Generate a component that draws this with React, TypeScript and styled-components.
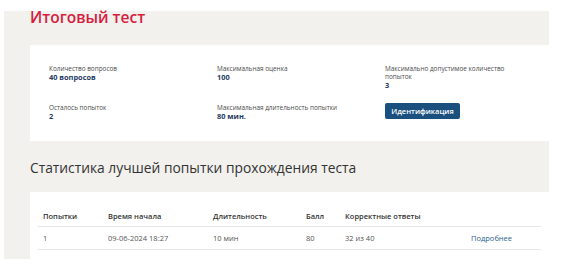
import React from "react";
import styled, { createGlobalStyle } from "styled-components";

const Global = createGlobalStyle`
  html, body { margin: 0; padding: 0; background: #ffffff; }
  body { font-family: "Open Sans", "Noto Sans", sans-serif; }
`;

const Page = styled.div`
  padding-top: 11px;
`;

const Panel = styled.section`
  margin-left: 4px;
  width: 545px;
  height: 248px;
  background: #f2f1ee;
  padding-left: 26px;
  box-sizing: border-box;
`;

const Title = styled.h1`
  margin: 0 0 22px;
  font-size: 15.5px;
  line-height: 12px;
  font-weight: 600;
  color: #d5203d;
`;

const Card = styled.div<{ $h: number }>`
  background: #ffffff;
  height: ${(p) => p.$h}px;
  box-sizing: border-box;
`;

const InfoGrid = styled.div`
  display: grid;
  grid-template-columns: 168px 168px 1fr;
  grid-template-rows: 39px auto;
  padding: 20px 0 0 19px;
`;

const Field = styled.div`
  display: flex;
  flex-direction: column;
  align-items: flex-start;
`;

const Label = styled.span<{ $wrap?: number }>`
  font-size: 6.4px;
  line-height: 8px;
  color: #4a4a4a;
  white-space: ${(p) => (p.$wrap ? "normal" : "nowrap")};
  max-width: ${(p) => (p.$wrap ? `${p.$wrap}px` : "none")};
`;

const Value = styled.span`
  font-size: 7.4px;
  line-height: 9px;
  font-weight: 700;
  color: #1f3a60;
`;

const Button = styled.button`
  margin-top: -1px;
  width: 75px;
  height: 16px;
  padding: 0;
  border: none;
  border-radius: 2px;
  background: #1b4f7e;
  color: #ffffff;
  font-family: "Open Sans", sans-serif;
  font-size: 7.5px;
  font-weight: 600;
`;

const SubTitle = styled.h2`
  margin: 0;
  height: 51px;
  box-sizing: border-box;
  padding-top: 17px;
  font-size: 13.8px;
  line-height: 20px;
  font-weight: 400;
  color: #333333;
`;

const Table = styled.div`
  margin-left: 8px;
  width: 503px;
  padding-top: 14px;
`;

const Row = styled.div<{ $head?: boolean }>`
  display: grid;
  grid-template-columns: 65px 105px 93px 39px 126px 1fr;
  height: ${(p) => (p.$head ? 20 : 22)}px;
  align-items: center;
  border-bottom: 1px solid #e7e7e7;
  font-size: 7.5px;
  font-weight: ${(p) => (p.$head ? 600 : 400)};
  color: ${(p) => (p.$head ? "#333" : "#555")};
`;

const Cell = styled.span`
  padding-left: 5px;
`;

const LinkCell = styled.a`
  padding-left: 5px;
  color: #2d5f8f;
  text-decoration: none;
`;

export default function App() {
  return (
    <Page>
      <Global />
      <Panel>
        <Title>Итоговый тест</Title>
        <Card $h={96}>
          <InfoGrid>
            <Field>
              <Label>Количество вопросов</Label>
              <Value>40 вопросов</Value>
            </Field>
            <Field>
              <Label>Максимальная оценка</Label>
              <Value>100</Value>
            </Field>
            <Field>
              <Label $wrap={125}>Максимально допустимое количество попыток</Label>
              <Value>3</Value>
            </Field>
            <Field>
              <Label>Осталось попыток</Label>
              <Value>2</Value>
            </Field>
            <Field>
              <Label>Максимальная длительность попытки</Label>
              <Value>80 мин.</Value>
            </Field>
            <Field>
              <Button>Идентификация</Button>
            </Field>
          </InfoGrid>
        </Card>
        <SubTitle>Статистика лучшей попытки прохождения теста</SubTitle>
        <Card $h={67}>
          <Table>
            <Row $head>
              <Cell>Попытки</Cell>
              <Cell>Время начала</Cell>
              <Cell>Длительность</Cell>
              <Cell>Балл</Cell>
              <Cell>Корректные ответы</Cell>
              <Cell />
            </Row>
            <Row>
              <Cell>1</Cell>
              <Cell>09-06-2024 18:27</Cell>
              <Cell>10 мин</Cell>
              <Cell>80</Cell>
              <Cell>32 из 40</Cell>
              <LinkCell href="#">Подробнее</LinkCell>
            </Row>
          </Table>
        </Card>
      </Panel>
    </Page>
  );
}
